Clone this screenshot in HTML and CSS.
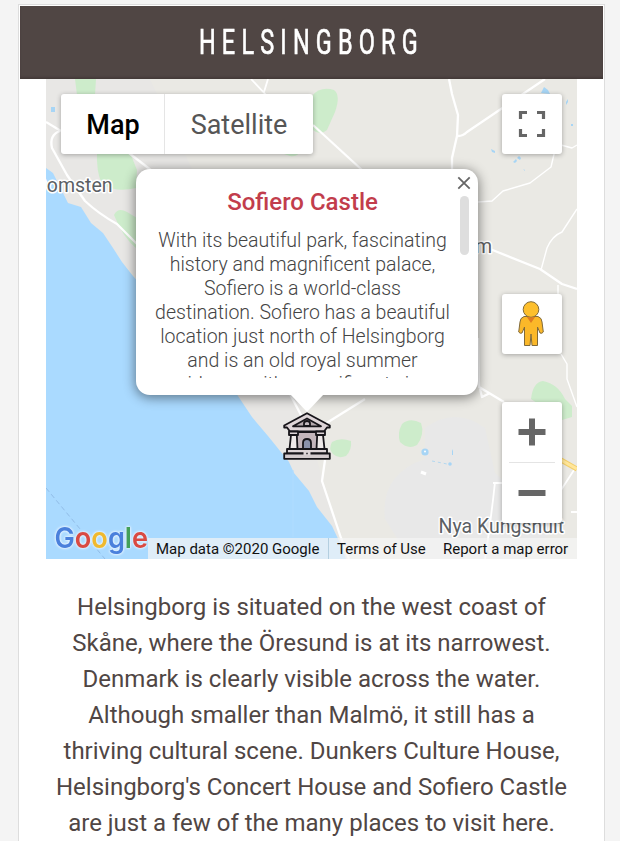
FILE: index.html
```html
<!DOCTYPE html>
<html lang="en">
<head>
<meta charset="utf-8">
<title>Helsingborg</title>
<link rel="stylesheet" href="styles.css">
</head>
<body>
<main class="card">
  <header class="card-header"><h1 class="card-title">HELSINGBORG</h1></header>
  <section class="map">
    <svg class="map-tiles" viewBox="46 79 531 480" width="531" height="480">
      <rect x="46" y="79" width="531" height="480" fill="#eae9e4"/>
      <path d="M46 79H150L300 400L345 559H320L220 395L140 280L46 190Z" fill="#e8e7e5"/>
      <path d="M425 428q30-22 60 0l10 45 60 55-30 31H410l-25-40q-5-45 40-60z" fill="#e8e8e8"/>
      <g fill="#cdeccb">
        <path d="M75 79H96L95 95H77Z"/>
        <path d="M97 150H129L137 170L136 188Q116 193 102 184Q96 172 97 150Z"/>
        <path d="M114 215Q118 207 127 212L137 218V249Q123 238 114 215Z"/>
        <path d="M312 96Q320 86 334 90Q341 95 335 112L327 130Q320 136 313 130Z"/>
        <path d="M281 153h18q-3 4-9 3z"/>
        <path d="M332 442Q340 437 351 441Q352 450 346 456Q338 459 333 454Q328 449 332 442Z"/>
        <path d="M402 424Q410 417 421 423Q425 434 417 445Q408 450 400 442Q397 433 402 424Z"/>
        <path d="M531 399Q533 382 543 381Q558 384 565 399L572 406V417L562 420Z"/>
      </g>
      <path d="M46 168L53 173L63 193L68 203L81 207L91 223L103 233L113 248L122 262L133 276L236 393L252 417L268 436L289 462L294 473L309 491L317 507L332 526L340 543L346 559H46Z" fill="#aadaff"/>
      <path d="M46 488L105 559" stroke="#91bce7" stroke-dasharray="5 3" fill="none"/>
      <path d="M293 470V537" stroke="#b0dcff" fill="none"/>
      <g fill="none" stroke="#fff" stroke-width="2.3" stroke-linejoin="round">
        <path d="M46 122L61 131"/>
        <path d="M60 131Q49 135 52 148L67 175L85 201Q99 214 117 224L137 244"/>
        <path d="M129 153L170 185"/>
        <path d="M251 79L268 97M264 92L268 79" stroke-width="1.8"/>
        <path d="M313 125L362 170"/>
        <path d="M449 79L452 94L458 115L457 136L452 158V170"/>
        <path d="M458 136Q463 136 467 132L545 79"/>
        <path d="M490 249L540 269L562 284L577 289"/>
        <path d="M478 202L492 201L503 191L530 183L551 167L555 150L561 145L572 148L577 145" stroke-width="1.4"/>
        <path d="M577 209L562 232Q552 236 547 248L541 270M558 285V294M561 354L567 364V379L577 407" stroke-width="1.4"/>
        <path d="M478 338L479 387L504 402M480 389L482 397L490 393"/>
        <path d="M325 424L365 399M290 394L302 417M325 460L322 481L341 538L349 559"/>
        <path d="M493 483H504M495 482L493 500L489 532L485 559M571 512h6M561 490l13-20" stroke-width="1.8"/>
      </g>
      <path d="M561 460L577 469" stroke="#f2ce69" stroke-width="5"/>
      <path d="M561 460L577 469" stroke="#ffe69a" stroke-width="3"/>
      <g fill="#a7d5f5">
        <path d="M541 93L544 87L548 90L550 94Z"/>
        <path d="M51 107h4v5h-4zM566 102l2-3v3l-2 3zM491 149l4 2v2l-3-1zM513 162l3-3 1 2-2 2zM519 156l2 2-1 2-3-2zM523 169l2 1v1zM571 124h2v2h-2zM452 451l1-2v6h-1z"/>
        <circle cx="425" cy="452" r="3.6"/><circle cx="450" cy="464" r="1.8"/>
      </g>
      <circle cx="425" cy="451.500" r="1" fill="#fff"/>
      <path d="M432 461l15 3" stroke="#b4d8f0" stroke-dasharray="3 3"/>
      <path d="M421 472l5 2" stroke="#fff" stroke-width="3"/>
      <g class="place">
        <text x="34" y="192">Domsten</text>
        <text x="475" y="253">m</text>
        <text x="438.500" y="532.500">Nya Kungshult</text>
      </g>
    </svg>

    <div class="map-types">
      <div class="map-type map-type-active">Map</div>
      <div class="map-type">Satellite</div>
    </div>
    <div class="control fullscreen">
      <svg width="28" height="28" viewBox="0 0 28 28"><path d="M2.500 9V2.500H9M19 2.500H25.500V9M25.500 19V25.500H19M9 25.500H2.500V19" fill="none" stroke="#666" stroke-width="3.200"/></svg>
    </div>
    <div class="control pegman">
      <svg width="26" height="46" viewBox="0 0 26 46">
        <g stroke="#806a3b" stroke-width="1" stroke-linejoin="round">
          <path d="M6 15.500Q2 17 2 21L.7 31Q2 33 4 32L6.500 26V44.500H12L13 33L14 44.500H19.500V26L22 32Q24 33 25.300 31L24 21Q24 17 20 15.500Z" fill="#fbb829"/>
          <circle cx="13" cy="8.500" r="7.800" fill="#fdbf2d"/>
        </g>
        <path d="M8.500 15.500Q13 17.500 17.500 15.500L13 22Z" fill="#e07b20"/>
      </svg>
    </div>
    <div class="zoom">
      <div class="zoom-button"><svg width="28" height="28" viewBox="0 0 28 28"><path d="M14 .5V27.500M.5 14H27.500" stroke="#666" stroke-width="6"/></svg></div>
      <div class="zoom-line"></div>
      <div class="zoom-button"><svg width="28" height="28" viewBox="0 0 28 28"><path d="M.5 14H27.500" stroke="#666" stroke-width="6"/></svg></div>
    </div>

    <article class="popup">
      <div class="popup-scroll">
        <h2 class="popup-title">Sofiero Castle</h2>
        <p class="popup-text">With its beautiful park, fascinating<br>history and magnificent palace,<br>Sofiero is a world-class<br>destination. Sofiero has a beautiful<br>location just north of Helsingborg<br>and is an old royal summer<br>residence with magnificent views</p>
      </div>
      <svg class="popup-close" width="14" height="14" viewBox="0 0 14 14"><path d="M1.300 1.300L12.700 12.700M12.700 1.300L1.300 12.700" stroke="#666" stroke-width="1.800"/></svg>
      <div class="popup-thumb"></div>
    </article>
    <svg class="popup-tip" width="34" height="18" viewBox="0 0 34 18"><path d="M0 0H34L17 18Z" fill="#fff"/></svg>
    <svg class="marker" width="48" height="48" viewBox="0 0 48 48">
      <g fill="#ded5d8" stroke="#17151a" stroke-width="1.800" stroke-linejoin="round">
        <path d="M11 20H37V38H11Z" fill="#c3b5bb"/>
        <path d="M1.200 13.500L24 1.200L46.800 13.500V15.500H44L41 19.500H7L4 15.500H1.200Z"/>
        <path d="M10 14.300L24 6.500L38 14.300Z" fill="#b5aaaf"/>
        <path d="M21 14V11.500Q21 9 24 9Q27 9 27 11.500V14Z" fill="#c4bbc0"/>
        <path d="M6 19.500H15V23H6ZM33 19.500H42V23H33Z"/>
        <path d="M8 23H13.800L14.500 37H6.500ZM34.200 23H40L41.500 37H33.500Z" fill="#eee9e9"/>
        <path d="M20 37V31Q20 27 24 27Q28 27 28 31V37Z" fill="#8a91ab"/>
        <path d="M4 37H44V41.500H4Z"/>
        <path d="M1.200 41.500H46.800V46.800H1.200Z" fill="#d4cbce"/>
      </g>
      <path d="M20.500 39H27.500V43H20.500Z" fill="#ded5d8"/><path d="M23.300 41.500H24.700" stroke="#17151a" stroke-width="1.600"/>
    </svg>
    <svg class="logo" width="100" height="38" viewBox="0 0 100 38">
      <g class="logo-halo"><text x="2.500" y="27" textLength="93.500" lengthAdjust="spacingAndGlyphs"><tspan fill="#4a80dc">G</tspan><tspan fill="#d94a43">o</tspan><tspan fill="#efb92e">o</tspan><tspan fill="#4a80dc">g</tspan><tspan fill="#43a05a">l</tspan><tspan fill="#d94a43">e</tspan></text></g>
    </svg>
    <footer class="legal">
      <span class="legal-item legal-data">Map data ©2020 Google</span><span class="legal-item legal-terms">Terms of Use</span><span class="legal-item legal-report">Report a map error</span>
    </footer>
  </section>
  <p class="description">Helsingborg is situated on the west coast of<br>Skåne, where the Öresund is at its narrowest.<br>Denmark is clearly visible across the water.<br>Although smaller than Malmö, it still has a<br>thriving cultural scene. Dunkers Culture House,<br>Helsingborg's Concert House and Sofiero Castle<br>are just a few of the many places to visit here.</p>
</main>
</body>
</html>
```

FILE: styles.css
```css
* { box-sizing: border-box; }
html { overflow: hidden; }
body {
  margin: 0;
  padding-top: 4px;
  height: 841px;
  overflow: hidden;
  background: #f4f4f4;
  font-family: Roboto, sans-serif;
}
.card {
  width: 587px;
  height: 837px;
  margin-left: 18px;
  padding: 1px;
  border: 1px solid #ddd;
  border-bottom: 0;
  background: #fff;
}
.card-header {
  display: flex;
  justify-content: center;
  align-items: center;
  width: 583px;
  height: 73px;
  background: #504644;
  box-shadow: inset 0 -2px 2px #443b39;
}
.card-title {
  margin: 0;
  color: #fff;
  font-size: 35.500px;
  font-weight: 400;
  line-height: 73px;
  letter-spacing: 9.400px;
  transform: scaleX(.66);
  white-space: nowrap;
  -webkit-text-stroke: .7px #fff;
}
.map {
  position: relative;
  width: 531px;
  height: 480px;
  margin-left: 26px;
  overflow: hidden;
}
.map-tiles { display: block; }
.place {
  fill: #5b6064;
  stroke: #fff;
  stroke-width: 3px;
  stroke-linejoin: round;
  paint-order: stroke;
  font-size: 19.500px;
}
.map-types {
  position: absolute;
  left: 15px;
  top: 15px;
  display: flex;
  height: 60px;
  border-radius: 3px;
  background: #fff;
  box-shadow: 0 1px 5px rgba(0, 0, 0, .3);
}
.map-type {
  width: 148px;
  color: #565656;
  font-size: 27px;
  line-height: 62px;
  text-align: center;
}
.map-type-active {
  width: 104px;
  padding-left: 1px;
  border-right: 1px solid #e5e5e5;
  color: #000;
  font-weight: 500;
}
.control {
  position: absolute;
  left: 456px;
  display: flex;
  justify-content: center;
  align-items: center;
  width: 60px;
  height: 60px;
  border-radius: 3px;
  background: #fff;
  box-shadow: 0 1px 5px rgba(0, 0, 0, .3);
}
.fullscreen { top: 15px; }
.pegman { top: 215px; padding-right: 2px; }
.zoom {
  position: absolute;
  left: 456px;
  top: 323px;
  width: 60px;
  height: 121px;
  border-radius: 3px;
  background: #fff;
  box-shadow: 0 1px 5px rgba(0, 0, 0, .3);
}
.zoom-button {
  display: flex;
  justify-content: center;
  align-items: center;
  height: 60px;
}
.zoom-line { height: 1px; margin: 0 7px; background: #e4e4e4; }
.popup {
  position: absolute;
  left: 90px;
  top: 90px;
  width: 342px;
  height: 226px;
  padding: 17px 9px 18px;
  border-radius: 14px;
  background: #fff;
  box-shadow: 0 2px 12px 1px rgba(0, 0, 0, .45);
}
.popup-scroll { height: 192px; overflow: hidden; text-align: center; }
.popup-title {
  margin: 0 0 11px;
  color: #c23d4c;
  font-size: 24px;
  font-weight: 500;
  line-height: 32px;
}
.popup-title, .popup-text { width: 315px; }
.popup-text {
  margin: 0;
  color: #444;
  font-size: 19.500px;
  font-weight: 300;
  line-height: 24px;
}
.popup-close { position: absolute; left: 321px; top: 7px; }
.popup-thumb {
  position: absolute;
  left: 324px;
  top: 27px;
  width: 9px;
  height: 59px;
  border-radius: 5px;
  background: #dedede;
}
.popup-tip { position: absolute; left: 244px; top: 315px; }
.marker { position: absolute; left: 237px; top: 333px; }
.logo {
  position: absolute;
  left: 6px;
  top: 442px;
  font-family: Inter, sans-serif;
  font-size: 29px;
  font-weight: 600;
}
.logo-halo { filter: drop-shadow(0 0 1px #eaf5ff) drop-shadow(0 0 1px #eaf5ff); }
.legal {
  position: absolute;
  left: 102px;
  bottom: 0;
  display: flex;
  width: 429px;
  height: 21px;
  background: rgba(245, 245, 245, .7);
  color: #111;
  font-size: 15px;
  line-height: 22px;
  white-space: nowrap;
}
.legal-data { width: 181px; padding-left: 8px; border-right: 1px solid #b4cfe0; }
.legal-terms { width: 106px; padding-left: 8px; }
.legal-report { padding-left: 8px; }
.description {
  width: 583px;
  margin: 30px 0 0;
  color: #504644;
  font-size: 24px;
  line-height: 36px;
  text-align: center;
  white-space: nowrap;
}
```
